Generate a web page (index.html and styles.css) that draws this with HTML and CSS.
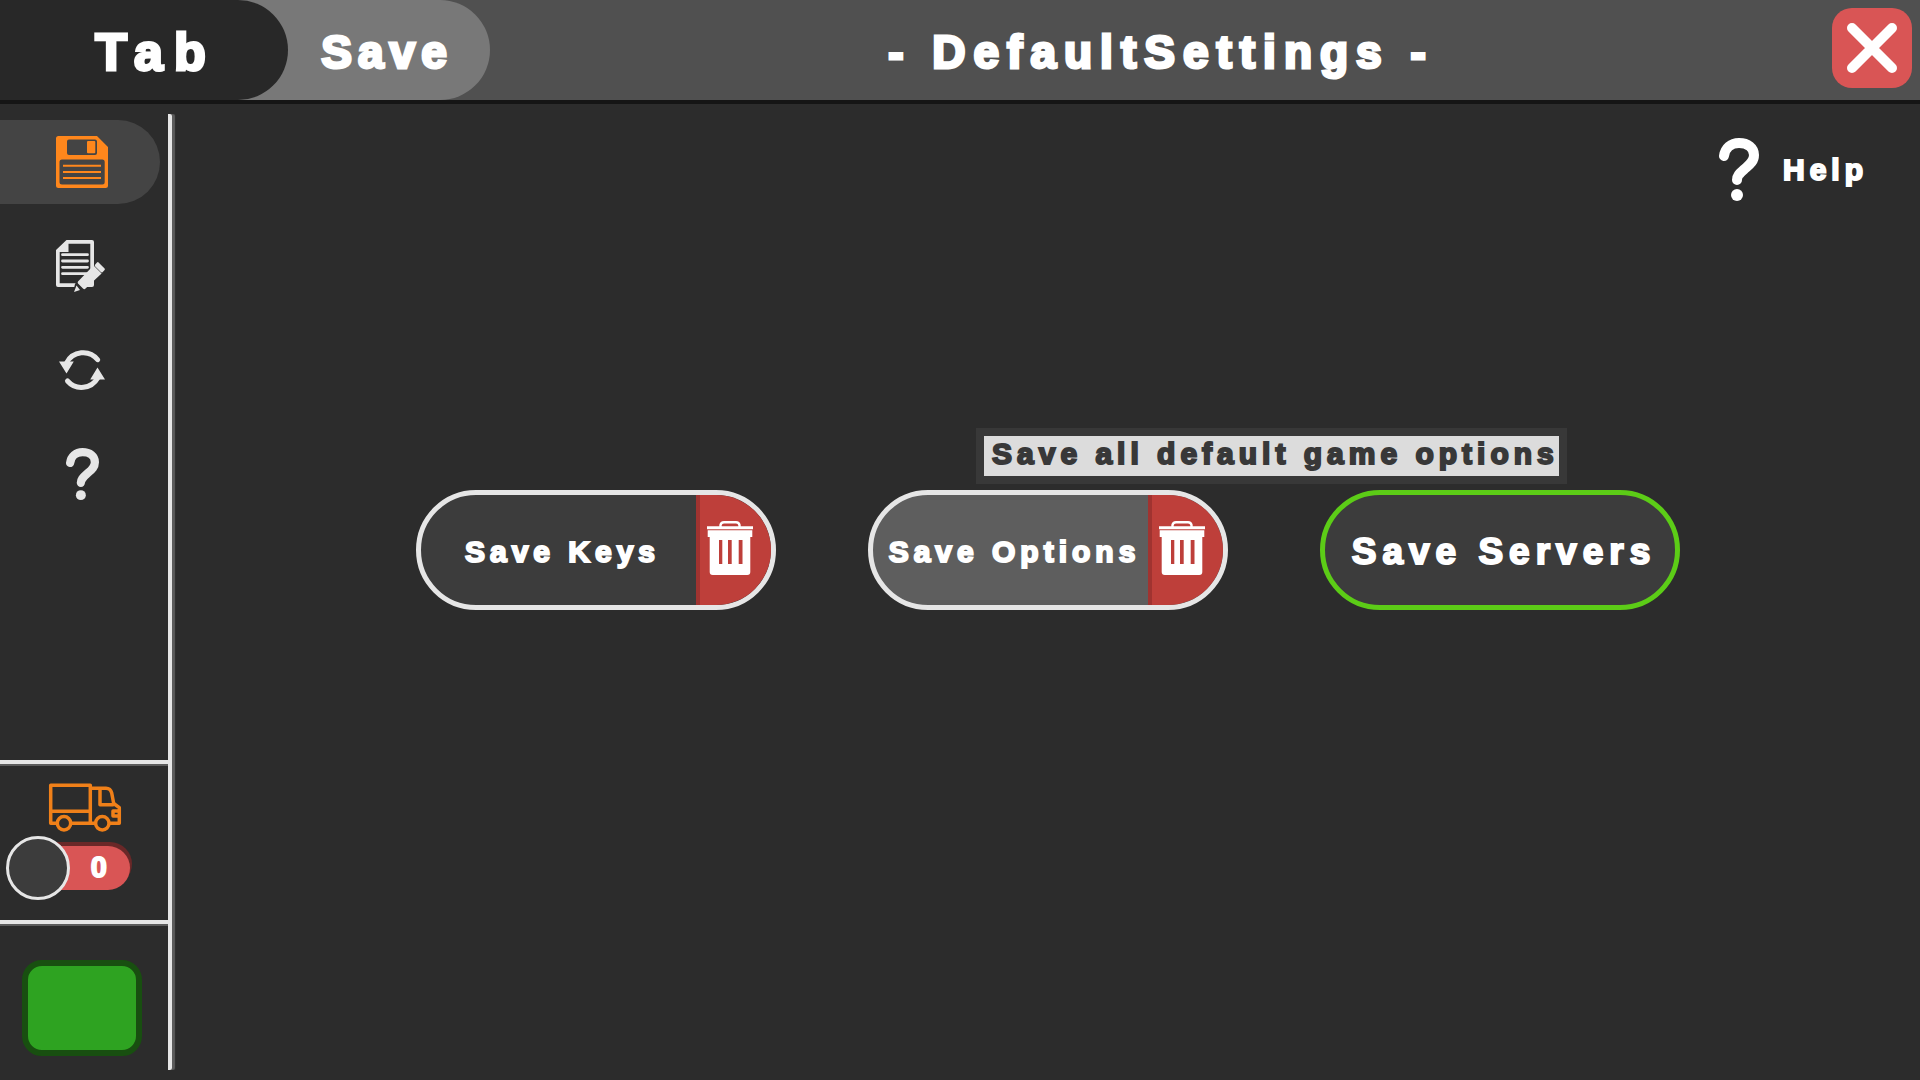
FILE: index.html
```html
<!DOCTYPE html>
<html lang="en">
<head>
<meta charset="utf-8">
<meta name="viewport" content="width=device-width, initial-scale=1">
<title>DefaultSettings</title>
<link rel="stylesheet" href="styles.css">
</head>
<body>
<svg class="symbols" aria-hidden="true">
  <symbol id="question" viewBox="0 0 40 64">
    <path d="M5 18C6 10 12 5 20 5C29 5 35 10 35 17C35 24 30 27 25 31.500C20 36 18 38 18 42" fill="none" stroke="currentColor" stroke-width="10" stroke-linecap="round"/>
    <circle cx="18" cy="57" r="6" fill="currentColor"/>
  </symbol>
  <symbol id="trash" viewBox="0 0 46 54">
    <path d="M13.500 6V4Q14 1.200 17 1.200H29Q32 1.200 32.500 4V6" fill="none" stroke="currentColor" stroke-width="2.400"/>
    <path fill="currentColor" d="M0 5.300H46V8.300H0Z"/>
    <path fill="currentColor" fill-rule="evenodd" d="M.7 9.200H45.300V16H43.300V51Q43.300 54 40.300 54H5.700Q2.700 54 2.700 51V16H.7ZM12 19V43H15.300V19ZM21 19V43H24.700V19ZM31.700 19V43H35.500V19Z"/>
  </symbol>
</svg>

<header class="topbar">
  <div class="tabs">
    <button class="tab tab-main" type="button">Tab</button>
    <button class="tab tab-save" type="button">Save</button>
  </div>
  <h1 class="title">- DefaultSettings -</h1>
  <button class="close" type="button" aria-label="Close">
    <svg viewBox="0 0 80 80" aria-hidden="true"><path d="M20 20L60 60M60 20L20 60" stroke="currentColor" stroke-width="10" stroke-linecap="round"/></svg>
  </button>
</header>

<div class="layout">
  <aside class="sidebar">
    <nav class="nav">
      <a class="nav-item active" href="#save" aria-label="Save">
        <svg width="52" height="52" viewBox="0 0 52 52" aria-hidden="true">
          <path fill="currentColor" fill-rule="evenodd" d="M2.500 0H41L52 11V49.500Q52 52 49.500 52H2.500Q0 52 0 49.500V2.500Q0 0 2.500 0ZM13 3.500Q11 3.500 11 5.500V17Q11 19 13 19H39Q41 19 41 17V5.500Q41 3.500 39 3.500ZM6 23.500Q3.500 23.500 3.500 26V46Q3.500 48.500 6 48.500H46.200Q48.700 48.500 48.700 46V26Q48.700 23.500 46.200 23.500Z"/>
          <rect x="31" y="5" width="8.300" height="12.300" rx="1" fill="currentColor"/>
          <path d="M7 29.700H45M7 36H45M7 42H45" stroke="currentColor" stroke-width="2"/>
        </svg>
      </a>
      <a class="nav-item" href="#edit" aria-label="Edit">
        <svg width="52" height="52" viewBox="0 0 52 52" aria-hidden="true">
          <path fill="currentColor" fill-rule="evenodd" d="M10.500 0H36Q38 0 38 2V45Q38 47 36 47H2Q0 47 0 45V10ZM12.500 3.700V12H3.700V43.200H34.300V3.700Z"/>
          <path d="M6.500 14.700H31.500M6.500 21H31.500M6.500 27.300H31.500M6.500 33.700H31.500" stroke="currentColor" stroke-width="2.800" stroke-linecap="round"/>
          <path class="cut" d="M22 40L28.500 49.500L17 53L19 44Z"/>
          <path fill="currentColor" d="M37.500 25.500L45.600 33.500L29 49Q28 49.500 27 48.500L22 43.500Q21.300 42.500 22 41.500ZM20.500 45.600L24 50L18 52ZM42.300 22.300L48.600 28.500Q49.200 29.300 48.600 30L46.500 32.300Q45.500 32.800 44.800 32.100L39 26.300Q38.500 25.500 39 24.800L41 22.500Q41.700 21.700 42.300 22.300Z"/>
        </svg>
      </a>
      <a class="nav-item" href="#refresh" aria-label="Refresh">
        <svg width="46" height="43" viewBox="0 0 46 43" aria-hidden="true">
          <path d="M38.700 10.700A18.600 18.600 0 0 0 7.500 14M8.500 32A18.600 18.600 0 0 0 38.700 29" fill="none" stroke="currentColor" stroke-width="5" stroke-linecap="round"/>
          <path fill="currentColor" d="M0 12.500H14.800L7.500 24.500ZM46 30.500H31.200L38.500 18.500Z"/>
        </svg>
      </a>
      <a class="nav-item" href="#help" aria-label="Help">
        <svg width="33" height="53" aria-hidden="true"><use href="#question"/></svg>
      </a>
    </nav>

    <section class="vehicle" aria-label="Vehicle">
      <svg class="truck" width="74" height="50" viewBox="0 0 74 50" fill="none" stroke="currentColor" stroke-width="3.500" stroke-linejoin="round" aria-hidden="true">
        <path d="M9 40.300H2.700V2.300H42.300V40.300M2.700 28.300H42.300M23 40.300H47.500M42.300 5.300H58Q62.500 5.300 63.700 10L65.700 20.500L71.300 24.700V40.300H61.500M52 5.300V21.700H65.700M71.300 28H65V33H71.300"/>
        <circle cx="16" cy="40.300" r="6.700"/><circle cx="54.300" cy="40.300" r="6.700"/>
      </svg>
      <label class="toggle">
        <input class="toggle-input" type="checkbox" aria-label="Vehicle switch">
        <span class="toggle-track">0</span>
      </label>
    </section>

    <button class="status" type="button" aria-label="Confirm"></button>
  </aside>

  <main class="content">
    <button class="help" type="button">
      <svg width="40" height="64" aria-hidden="true"><use href="#question"/></svg>
      Help
    </button>
    <div class="choices">
      <div class="choice">
        <div class="pill">
          <button class="pill-main" type="button">Save Keys</button>
          <button class="pill-delete" type="button" aria-label="Delete keys"><svg width="46" height="54" aria-hidden="true"><use href="#trash"/></svg></button>
        </div>
      </div>
      <div class="choice">
        <div class="pill hovered">
          <button class="pill-main" type="button" aria-describedby="options-tip">Save Options</button>
          <button class="pill-delete" type="button" aria-label="Delete options"><svg width="46" height="54" aria-hidden="true"><use href="#trash"/></svg></button>
        </div>
        <div class="tooltip" id="options-tip" role="tooltip">Save all default game options</div>
      </div>
      <div class="choice">
        <div class="pill unsaved">
          <button class="pill-main" type="button">Save Servers</button>
        </div>
      </div>
    </div>
  </main>
</div>
</body>
</html>
```

FILE: styles.css
```css
:root {
  --bg: #2c2c2c;
  --light: #e6e6e6;
  --panel: #3c3c3c;
  --red: #d95555;
  --orange: #f08019;
}

* { box-sizing: border-box; }

body {
  margin: 0;
  min-height: 100vh;
  display: flex;
  flex-direction: column;
  background: var(--bg);
  color: #fff;
  font-family: "Liberation Sans", Arial, sans-serif;
  font-size: 30px;
  font-weight: 700;
  letter-spacing: 5px;
  -webkit-text-stroke: 2px currentColor;
}

button {
  margin: 0;
  padding: 0;
  border: 0;
  background: none;
  color: inherit;
  font: inherit;
  letter-spacing: inherit;
  cursor: pointer;
}

svg { display: block; flex: none; }

.symbols { position: absolute; width: 0; height: 0; }

/* Top bar */
.topbar {
  display: flex;
  align-items: center;
  height: 104px;
  padding-right: 8px;
  background: #505050;
  border-bottom: 4px solid #151515;
  -webkit-text-stroke-width: 3px;
}

.tabs { display: flex; align-self: stretch; }

.tab { padding-top: 4px; border-radius: 0 50px 50px 0; }

.tab-main {
  position: relative;
  z-index: 1;
  width: 288px;
  padding-left: 24px;
  background: #282828;
  font-size: 52px;
  letter-spacing: 11px;
}

.tab-save {
  width: 252px;
  margin-left: -50px;
  padding-left: 46px;
  background: #787878;
  font-size: 46px;
  letter-spacing: 6px;
}

.title {
  flex: 1;
  margin: 0;
  padding-top: 4px;
  font-size: 46px;
  letter-spacing: 8px;
  text-align: center;
}

.close {
  width: 80px;
  height: 80px;
  margin-bottom: 4px;
  border-radius: 20px;
  background: var(--red);
}

/* Sidebar */
.layout { flex: 1; display: flex; }

.sidebar {
  display: flex;
  flex-direction: column;
  width: 172px;
  margin: 10px 0;
  padding: 6px 0 14px;
  border-right: 4px solid var(--light);
  border-radius: 0 2px 2px 0;
  box-shadow: 3px 0 1px #5c5c5c;
  clip-path: inset(0 -5px 0 0);
}

.nav {
  display: flex;
  flex-direction: column;
  gap: 20px;
}

.nav-item {
  display: flex;
  align-items: center;
  justify-content: center;
  width: 160px;
  height: 84px;
  padding-left: 4px;
  border-radius: 0 42px 42px 0;
  color: var(--light);
}

.nav-item.active { background: #444; color: #ff871c; }

.cut { fill: var(--bg); }

.vehicle {
  margin-top: auto;
  padding: 19px 0 20px;
  border: solid var(--light);
  border-width: 4px 0;
  box-shadow: 0 2px 0 #5c5c5c, inset 0 2px 0 #5c5c5c;
}

.truck { margin: 0 48px 3px; color: var(--orange); }

.toggle {
  display: flex;
  align-items: center;
  height: 64px;
  padding-left: 6px;
}

.toggle-input {
  appearance: none;
  position: relative;
  width: 64px;
  height: 64px;
  margin: 0;
  border: 3px solid var(--light);
  border-radius: 50%;
  background: var(--panel);
}

.toggle-track {
  width: 80px;
  height: 44px;
  margin-left: -20px;
  padding-left: 40px;
  border-radius: 0 22px 22px 0;
  background: var(--red);
  box-shadow: 2px -4px 0 #6a2828;
  font-family: "Noto Sans", sans-serif;
  font-weight: 900;
  line-height: 42px;
  letter-spacing: 0;
  -webkit-text-stroke-width: 0;
}

.status {
  width: 120px;
  height: 96px;
  margin: 36px 22px 0;
  border: 6px solid #184f10;
  border-radius: 20px;
  background: #2ea321;
}

/* Content */
.content {
  flex: 1;
  display: flex;
  flex-direction: column;
  padding: 34px 52px 182px 56px;
}

.help {
  display: flex;
  align-items: center;
  align-self: flex-end;
  gap: 24px;
}

.choices {
  flex: 1;
  display: flex;
  flex-wrap: wrap;
  align-items: center;
  align-content: center;
  justify-content: center;
  gap: 92px;
}

.choice { position: relative; }

.pill {
  display: flex;
  width: 360px;
  height: 120px;
  overflow: hidden;
  border: 5px solid var(--light);
  border-radius: 60px;
  background: var(--panel);
}

.pill.hovered { background: #5e5e5e; }

.pill.unsaved { border-color: #5ccc17; font-size: 37px; letter-spacing: 6px; }

.pill-main { flex: 1; padding: 4px 0 0 8px; white-space: nowrap; }

.pill-delete {
  display: flex;
  align-items: center;
  width: 75px;
  padding: 0 0 4px 7px;
  border-left: 4px solid #a03330;
  background: #be3f3a;
}

.tooltip {
  position: absolute;
  left: 108px;
  bottom: 126px;
  padding: 0 0 4px 8px;
  border: 8px solid #383838;
  background: #dcdcdc;
  color: #383838;
  line-height: 36px;
  white-space: nowrap;
}
```
